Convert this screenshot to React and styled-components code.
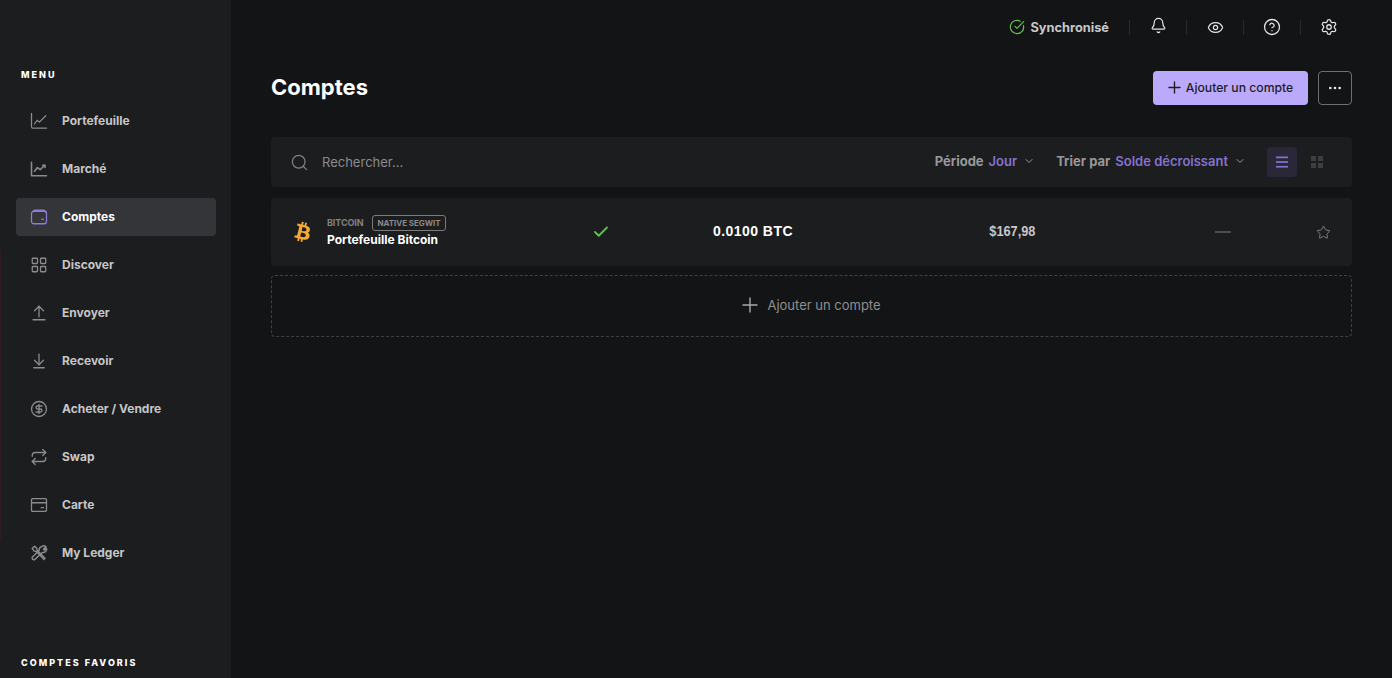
import React from "react";
import styled, { createGlobalStyle } from "styled-components";
import {
  Search, Plus, Ellipsis, ChevronDown, Star, Check, CircleCheckBig, Bell, Eye, CircleHelp, Settings,
  LayoutGrid, ArrowDownToLine, CircleDollarSign, Repeat,
} from "lucide-react";
import { FaBtc } from "react-icons/fa";

const Global = createGlobalStyle`
  html, body { margin: 0; padding: 0; height: 100%; background: #131415; overflow: hidden; }
  body { font-family: Inter, "Noto Sans", sans-serif; }
  #root { height: 100%; }
`;

const Shell = styled.div`
  display: flex;
  width: 1392px;
  height: 678px;
  background: #131415;
  overflow: hidden;
`;

const Sidebar = styled.aside`
  width: 231px;
  height: 678px;
  flex: none;
  background:
    linear-gradient(transparent 250px, #2e1c1e 250px, #2e1c1e 540px, transparent 540px) 0 0 / 1px 100% no-repeat,
    #1c1d1f;
  display: flex;
  flex-direction: column;
  padding: 69px 15px 0 16px;
  box-sizing: border-box;
`;

const SectionLabel = styled.div`
  font-size: 9px;
  line-height: 11px;
  font-weight: 800;
  letter-spacing: 2.02px;
  color: #ffffff;
  padding-left: 5px;
`;

const Nav = styled.nav`
  display: flex;
  flex-direction: column;
  gap: 10px;
  margin-top: 22px;
  flex: 1;
`;

const NavItem = styled.div`
  height: 38px;
  display: flex;
  align-items: center;
  gap: 14px;
  padding-left: 14px;
  border-radius: 4px;
  font-size: 12px;
  font-weight: 650;
  background: ${(p) => (p.$active ? "#343538" : "transparent")};
  color: ${(p) => (p.$active ? "#ffffff" : "#c6c6c7")};
  svg { flex: none; color: ${(p) => (p.$active ? "#8f7bd6" : "#8c8c8d")}; }
`;

const NavLabel = styled.span`
  margin-top: -2px;
`;

const FooterLabel = styled(SectionLabel)`
  margin-bottom: 10px;
`;

const Main = styled.main`
  flex: 1;
  display: flex;
  flex-direction: column;
  padding: 0 40px;
  min-width: 0;
`;

const TopBar = styled.header`
  height: 54px;
  display: flex;
  align-items: center;
  justify-content: flex-end;
  margin-right: -5px;
  color: #d8d8d8;
`;

const SyncStatus = styled.div`
  display: flex;
  align-items: center;
  gap: 5px;
  font-size: 12.8px;
  font-weight: 650;
  color: #c8c8ca;
  margin-right: 20px;
  svg { color: #66be54; }
`;

const Divider = styled.span`
  width: 1px;
  height: 15px;
  background: #2a2b2d;
`;

const TopIcon = styled.span`
  width: 56px;
  display: flex;
  justify-content: center;
  align-items: center;
  color: #e4e4e4;
  margin-top: ${(p) => p.$lift || 0}px;
`;

const PageHead = styled.div`
  display: flex;
  align-items: center;
  justify-content: space-between;
  height: 34px;
  margin-top: 17px;
`;

const Title = styled.h1`
  margin: -2px 0 0;
  font-size: 22px;
  font-weight: 650;
  color: #ffffff;
`;

const Actions = styled.div`
  display: flex;
  gap: 10px;
`;

const PrimaryButton = styled.button`
  width: 155px;
  height: 34px;
  display: flex;
  align-items: center;
  justify-content: center;
  gap: 2px;
  border: 0;
  border-radius: 4px;
  background: #bba9fc;
  color: #1c1d1f;
  font: 500 12.2px Inter, sans-serif;
  padding: 0 3px 1px 0;
`;

const MoreButton = styled.button`
  width: 34px;
  height: 34px;
  display: flex;
  align-items: center;
  justify-content: center;
  border: 1px solid #6f6f70;
  border-radius: 4px;
  background: transparent;
  color: #e6e6e6;
  padding: 0;
`;

const Toolbar = styled.div`
  margin-top: 32px;
  height: 50px;
  display: flex;
  align-items: center;
  background: #1c1d1f;
  border-radius: 4px;
  padding: 0 20px 0 19px;
`;

const SearchLabel = styled.div`
  flex: 1;
  display: flex;
  align-items: center;
  gap: 13px;
  font-size: 13px;
  color: #8b8b8c;
  svg { color: #808081; }
`;

const Filter = styled.div`
  display: flex;
  align-items: center;
  font-size: 13px;
  font-weight: 650;
  color: #98989a;
  padding-bottom: 2px;
  margin-right: ${(p) => p.$gap}px;
`;

const FilterValue = styled.span`
  color: #8472cf;
  font-weight: 600;
  margin-left: 5px;
  margin-right: 6px;
`;

const ViewButton = styled.span`
  width: 30px;
  height: 30px;
  display: flex;
  align-items: center;
  justify-content: center;
  border-radius: 4px;
  margin-left: ${(p) => p.$left || 0}px;
  background: ${(p) => (p.$active ? "#2a2838" : "transparent")};
  color: ${(p) => (p.$active ? "#8472cf" : "#3d3e40")};
`;

const AccountRow = styled.div`
  margin-top: 11px;
  height: 68px;
  background: #1c1d1f;
  border-radius: 4px;
  display: grid;
  grid-template-columns: 320px 122px 190px 132px 196px 1fr;
  align-items: center;
`;

const AccountCell = styled.div`
  display: flex;
  align-items: center;
  gap: 13px;
  padding-left: 23px;
`;

const BitcoinLogo = styled(FaBtc)`
  flex: none;
  transform: rotate(14deg);
  color: #f7a833;
  margin-left: -1px;
  margin-right: 1px;
`;

const AccountInfo = styled.div`
  display: flex;
  flex-direction: column;
  gap: 1px;
  margin-top: -3px;
`;

const AccountMeta = styled.div`
  display: flex;
  align-items: center;
  gap: 9px;
  font-size: 9px;
  font-weight: 700;
  letter-spacing: -0.1px;
  color: #818182;
`;

const Tag = styled.span`
  border: 1px solid #7a7a7b;
  border-radius: 3px;
  height: 14px;
  padding: 0 4px;
  display: flex;
  align-items: center;
  font-size: 8px;
  font-weight: 700;
  letter-spacing: -0.05px;
  color: #8a8a8b;
`;

const AccountName = styled.div`
  font-size: 12px;
  font-weight: 650;
  color: #ffffff;
`;

const Amount = styled.div`
  font: 700 14px "Liberation Sans", Arial, sans-serif;
  color: #ffffff;
  letter-spacing: 0.45px;
  padding-bottom: 2px;
`;

const Fiat = styled.div`
  font: 700 14.5px "Liberation Sans", Arial, sans-serif;
  color: #c6c6c7;
  justify-self: end;
  padding-bottom: 2px;
  transform: scaleX(0.88);
  transform-origin: right center;
`;

const Dash = styled.span`
  width: 16px;
  height: 2px;
  background: #4c4c4d;
  justify-self: end;
`;

const RowIcon = styled.span`
  display: flex;
  justify-self: ${(p) => p.$justify || "start"};
  color: ${(p) => p.$color};
  margin-right: ${(p) => p.$right || 0}px;
  margin-left: ${(p) => p.$left || 0}px;
`;

const AddRow = styled.div`
  margin-top: 9px;
  height: 62px;
  box-sizing: border-box;
  border: 1px dashed #3f4042;
  border-radius: 4px;
  display: flex;
  align-items: center;
  justify-content: center;
  gap: 5px;
  padding: 0 4px 2px 0;
  font-size: 13px;
  color: #8f8f90;
  svg { color: #a8a8a9; }
`;

const S = { width: 18, height: 18, viewBox: "0 0 24 24", fill: "none", stroke: "currentColor", strokeWidth: 1.7, strokeLinecap: "round", strokeLinejoin: "round" };

const ChartLine = () => (
  <svg {...S}><path d="M2 2v17.5a2 2 0 0 0 2 2h18" /><path d="M6 16l3.5-5 3 2.5L21 5" /></svg>
);
const ChartArea = () => (
  <svg {...S} strokeWidth={2.1}><path d="M2 3v18h20" /><path d="M6 15l4-5 3.5 3 6-6" /><path d="M17 7h3v3" /></svg>
);
const Wallet = () => (
  <svg {...S}><rect x="2" y="4.5" width="20" height="16.5" rx="3" /><path d="M4 4.5C4.8 3.4 6 3 7 3h11c1.6 0 3 .9 4 3" /><path d="M16 15h1.5" strokeWidth={2.2} /></svg>
);
const Card = () => (
  <svg {...S}><rect x="2" y="3.5" width="20" height="17" rx="1.5" /><path d="M2 9h20" /><path d="M15 15.5h3" /></svg>
);
const UpLine = () => (
  <svg {...S}><path d="M12 17V3" /><path d="M6 9l6-6 6 6" /><path d="M4 21h16" /></svg>
);
const Tools = () => (
  <svg {...S} strokeWidth={1.9}>
    <path d="M3 6l3-3 3 2.500.5 3L20 19l-1.500 1.500L8.500 10 5.500 9.500z" />
    <path d="M15.500 3.500a4.500 4.500 0 0 1 5.800 .2l-3.300 3 1 1.500 3-2.500a4.500 4.500 0 0 1-5.500 5.500L6.500 20.500a2.300 2.300 0 0 1-3.200-3.200l9-9a4.500 4.500 0 0 1 3.200-4.800z" />
  </svg>
);

const iconProps = { size: 18, strokeWidth: 1.7 };

const items = [
  ["Portefeuille", <ChartLine />],
  ["Marché", <ChartArea />],
  ["Comptes", <Wallet />, true],
  ["Discover", <LayoutGrid {...iconProps} />],
  ["Envoyer", <UpLine />],
  ["Recevoir", <ArrowDownToLine {...iconProps} />],
  ["Acheter / Vendre", <CircleDollarSign {...iconProps} />],
  ["Swap", <Repeat {...iconProps} />],
  ["Carte", <Card />],
  ["My Ledger", <Tools />],
];

export default function App() {
  return (
    <Shell>
      <Global />
      <Sidebar>
        <SectionLabel>MENU</SectionLabel>
        <Nav>
          {items.map(([label, icon, active]) => (
            <NavItem key={label} $active={active}>{icon}<NavLabel>{label}</NavLabel></NavItem>
          ))}
        </Nav>
        <FooterLabel>COMPTES FAVORIS</FooterLabel>
      </Sidebar>
      <Main>
        <TopBar>
          <SyncStatus><CircleCheckBig size={16} strokeWidth={1.8} />Synchronisé</SyncStatus>
          <Divider />
          <TopIcon $lift={-3}><Bell size={17} strokeWidth={1.7} /></TopIcon>
          <Divider />
          <TopIcon><Eye size={17} strokeWidth={1.7} /></TopIcon>
          <Divider />
          <TopIcon><CircleHelp size={18} strokeWidth={1.7} /></TopIcon>
          <Divider />
          <TopIcon><Settings size={18} strokeWidth={1.7} /></TopIcon>
        </TopBar>
        <PageHead>
          <Title>Comptes</Title>
          <Actions>
            <PrimaryButton><Plus size={19} strokeWidth={1.7} />Ajouter un compte</PrimaryButton>
            <MoreButton><Ellipsis size={16} strokeWidth={2} /></MoreButton>
          </Actions>
        </PageHead>
        <Toolbar>
          <SearchLabel><Search size={19} strokeWidth={1.6} />Rechercher...</SearchLabel>
          <Filter $gap={21}>Période<FilterValue>Jour</FilterValue><ChevronDown size={12} /></Filter>
          <Filter $gap={21}>Trier par<FilterValue>Solde décroissant</FilterValue><ChevronDown size={12} /></Filter>
          <ViewButton $active>
            <svg width="14" height="14" viewBox="0 0 14 14" fill="currentColor">
              <rect x="1" y="1.500" width="12" height="1.700" /><rect x="1" y="6.200" width="12" height="1.700" /><rect x="1" y="10.900" width="12" height="1.700" />
            </svg>
          </ViewButton>
          <ViewButton $left={5}>
            <svg width="14" height="14" viewBox="0 0 14 14" fill="currentColor">
              <rect x="1" y="1" width="5" height="5" /><rect x="8" y="1" width="5" height="5" />
              <rect x="1" y="8" width="5" height="5" /><rect x="8" y="8" width="5" height="5" />
            </svg>
          </ViewButton>
        </Toolbar>
        <AccountRow>
          <AccountCell>
            <BitcoinLogo size={20} />
            <AccountInfo>
              <AccountMeta>BITCOIN<Tag>NATIVE SEGWIT</Tag></AccountMeta>
              <AccountName>Portefeuille Bitcoin</AccountName>
            </AccountInfo>
          </AccountCell>
          <RowIcon $color="#66be54" $left={1}><Check size={18} strokeWidth={2.4} /></RowIcon>
          <Amount>0.0100 BTC</Amount>
          <Fiat>$167,98</Fiat>
          <Dash />
          <RowIcon $color="#8a8a8b" $justify="end" $right={21}><Star size={15} strokeWidth={1.4} /></RowIcon>
        </AccountRow>
        <AddRow><Plus size={24} strokeWidth={1.4} />Ajouter un compte</AddRow>
      </Main>
    </Shell>
  );
}
